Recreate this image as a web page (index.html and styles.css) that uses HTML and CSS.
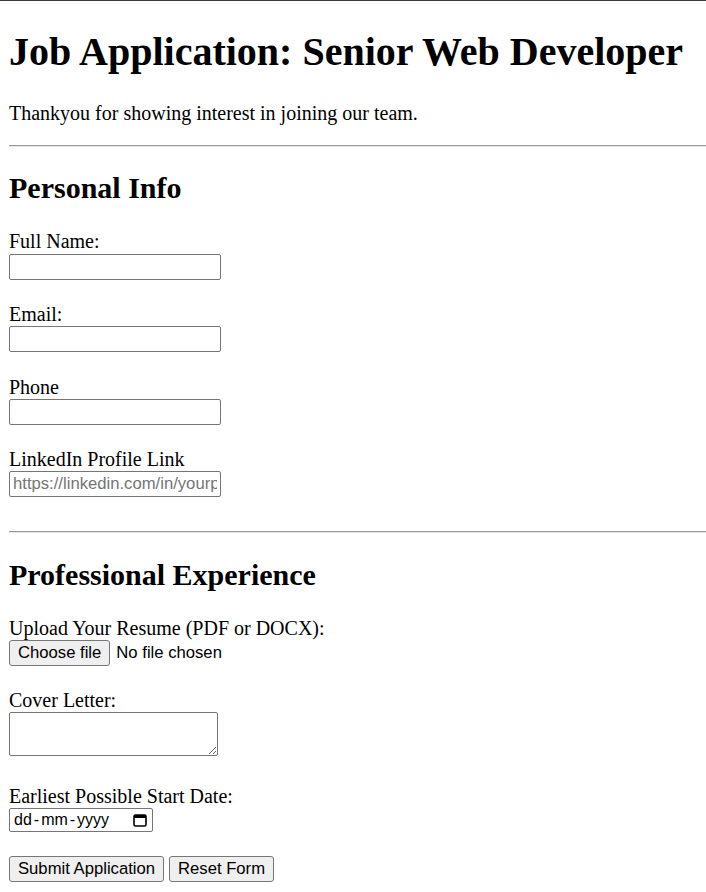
FILE: index.html
```html
<!DOCTYPE html>
<html lang="en">
<head>
<meta charset="utf-8">
<title>Job Application</title>
<link rel="stylesheet" href="styles.css">
</head>
<body>
<h1>Job Application: Senior Web Developer</h1>
<p>Thankyou for showing interest in joining our team.</p>
<hr>
<form>
<h2>Personal Info</h2>
<label for="name">Full Name:</label><br>
<input class="text-input" type="text" id="name"><br><br>
<label for="email">Email:</label><br>
<input class="text-input" type="email" id="email"><br><br>
<label for="phone">Phone</label><br>
<input class="text-input" type="tel" id="phone"><br><br>
<label for="linkedin">LinkedIn Profile Link</label><br>
<input class="text-input" type="url" id="linkedin" placeholder="https://linkedin.com/in/yourprofile"><br><br>
<hr>
<h2>Professional Experience</h2>
<label>Upload Your Resume (PDF or DOCX):</label><br>
<span class="file-input"><button type="button" class="btn">Choose file</button><span class="file-name">No file chosen</span></span><br><br>
<label for="cover">Cover Letter:</label><br>
<textarea class="textarea" id="cover"></textarea><br><br>
<label>Earliest Possible Start Date:</label><br>
<span class="date-input"><span class="date-text">dd<span class="sep">-</span>mm<span class="sep">-</span>yyyy</span><svg class="cal" width="14" height="13" viewBox="0 0 14 13"><rect x="1" y="1" width="12" height="11" rx="1.5" fill="none" stroke="#000" stroke-width="1.6"/><rect x="1" y="1" width="12" height="3" fill="#000"/></svg></span><br><br>
<button type="submit" class="btn">Submit Application</button> <button type="reset" class="btn">Reset Form</button>
</form>
</body>
</html>
```
FILE: styles.css
```css
html {
  border-top: 1px solid #3b3b3b;
}
body {
  margin: 0 0 10px 9px;
  font-family: "Liberation Serif", "Times New Roman", serif;
  font-size: 20px;
  color: #000;
  background: #fff;
}
h1 {
  font-size: 40px;
  margin: 26.8px 0;
}
p {
  margin: 20px 0;
}
hr {
  height: 0;
  margin: 10px 0;
  border: none;
  border-top: 1px solid #9a9a9a;
  border-bottom: 1px solid #e6e6e6;
}
h2 {
  font-size: 30px;
  line-height: normal;
  margin: 24.9px 0;
}
form {
  margin: 0;
  line-height: 23.3px;
}
.text-input {
  box-sizing: border-box;
  width: 212px;
  height: 26px;
  margin: 0;
  padding: 1px 3px;
  border: 1px solid #767676;
  border-radius: 2px;
  font-family: "Liberation Sans", Arial, sans-serif;
  font-size: 16.67px;
  color: #000;
  background: #fff;
}
.text-input::placeholder {
  color: #757575;
}
.btn {
  box-sizing: border-box;
  height: 26px;
  margin: 0;
  padding: 0 8px;
  border: 1px solid #767676;
  border-radius: 3px;
  background: #efefef;
  font-family: "Liberation Sans", Arial, sans-serif;
  font-size: 16.67px;
  line-height: normal;
  color: #000;
}
.file-input {
  display: inline-flex;
  align-items: center;
  font-family: "Liberation Sans", Arial, sans-serif;
  font-size: 16.67px;
  line-height: normal;
}
.file-name {
  margin-left: 6px;
}
.textarea {
  box-sizing: border-box;
  width: 209px;
  height: 44px;
  margin: 0;
  padding: 2px;
  border: 1px solid #767676;
  border-radius: 2px;
  vertical-align: baseline;
  font-family: "Liberation Mono", monospace;
  font-size: 16.67px;
}
.date-input {
  box-sizing: border-box;
  display: inline-flex;
  align-items: center;
  justify-content: space-between;
  width: 144px;
  height: 24px;
  padding: 0 5px 0 4px;
  border: 1px solid #767676;
  border-radius: 2px;
  vertical-align: bottom;
  font-family: "Liberation Sans", Arial, sans-serif;
  font-size: 16px;
  line-height: normal;
}
.sep {
  padding: 0 2px;
}
.cal {
  display: block;
}
```
